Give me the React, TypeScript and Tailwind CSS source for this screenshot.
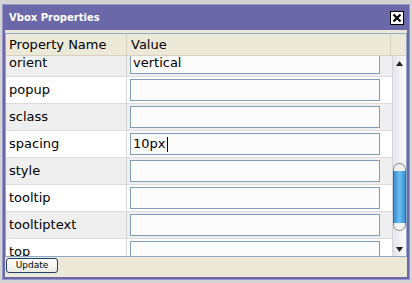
const rows = [
  { name: 'orient', value: 'vertical' },
  { name: 'popup', value: '' },
  { name: 'sclass', value: '' },
  { name: 'spacing', value: '10px', caret: true },
  { name: 'style', value: '' },
  { name: 'tooltip', value: '' },
  { name: 'tooltiptext', value: '' },
  { name: 'top', value: '' },
];

function CloseBox() {
  return (
    <div className="w-[14px] h-[14px] bg-white border border-black flex items-center justify-center">
      <svg width="10" height="10" viewBox="0 0 10 10">
        <path d="M1.5 1.5 L8.5 8.5 M8.5 1.5 L1.5 8.5" stroke="#000" strokeWidth="2.2" />
      </svg>
    </div>
  );
}

function Scrollbar() {
  return (
    <div className="w-[14px] h-full flex flex-col bg-gradient-to-r from-[#e4e4ec] to-[#fbfbfd] border-l border-[#d6d6de]">
      <div className="h-[14px] flex items-center justify-center">
        <svg width="7" height="5" viewBox="0 0 7 5">
          <path d="M3.5 0 L7 5 L0 5 Z" fill="#222" />
        </svg>
      </div>
      <div className="h-[93px]" />
      <div className="h-[68px] flex flex-col">
        <div className="h-[8px] rounded-t-full border border-b-0 border-[#8a8a8a] bg-[#f2f2f2]" />
        <div className="flex-1 bg-gradient-to-r from-[#3a8fd0] via-[#6cc0f0] to-[#3a8fd0] border-x border-[#2d6da8]" />
        <div className="h-[8px] rounded-b-full border border-t-0 border-[#8a8a8a] bg-[#f2f2f2]" />
      </div>
      <div className="flex-1 flex items-end justify-center pb-[4px]">
        <svg width="7" height="5" viewBox="0 0 7 5">
          <path d="M0 0 L7 0 L3.5 5 Z" fill="#222" />
        </svg>
      </div>
    </div>
  );
}

export default function App() {
  return (
    <div
      className="w-[412px] h-[283px] bg-[#d4d4d4] overflow-hidden pt-[4px] pl-[2px]"
      style={{ fontFamily: '"DejaVu Sans", Verdana, sans-serif' }}
    >
      <div className="w-[408px] h-[276px] bg-[#6a68a9] border border-[#9896c6] flex flex-col px-[2px] pb-[2px]">
        {/* Title bar */}
        <div className="h-[25px] flex items-center justify-between pl-[4px] pr-[3px] shrink-0">
          <span className="text-[10px] font-bold text-white">Vbox Properties</span>
          <CloseBox />
        </div>

        {/* Content */}
        <div className="flex-1 bg-[#ece9d8] flex flex-col pt-[3px]">
          <div className="h-[224px] shrink-0 border border-[#8fa9c8] flex flex-col overflow-hidden">
            {/* Header */}
            <div className="h-[22px] flex shrink-0 bg-[#ece9d8] border-b border-[#d6d2bf] text-[13px] text-black">
              <div className="w-[121px] pl-[3px] flex items-center border-r border-[#d6d2bf]">Property Name</div>
              <div className="w-[264px] pl-[4px] flex items-center border-r border-[#d6d2bf]">Value</div>
              <div className="flex-1" />
            </div>
            {/* Body */}
            <div className="flex-1 flex overflow-hidden">
              <div className="flex-1 overflow-hidden">
                <div className="-mt-[6px]">
                  {rows.map((r, i) => (
                    <div
                      key={r.name}
                      className={`h-[27px] flex border-b border-[#dcdcdc] ${i % 2 === 0 ? 'bg-[#efefef]' : 'bg-white'}`}
                    >
                      <div className="w-[121px] pl-[3px] flex items-center text-[13px] text-black border-r border-[#d4d4d4]">
                        {r.name}
                      </div>
                      <div className="flex-1 flex items-center pl-[3px]">
                        <div className="w-[250px] h-[22px] bg-[#fcfcfc] border border-[#7f9db9] flex items-center pl-[2px] text-[13px] text-black">
                          {r.value}
                          {r.caret && <span className="inline-block w-[1px] h-[15px] bg-black ml-[1px]" />}
                        </div>
                      </div>
                    </div>
                  ))}
                </div>
              </div>
              <Scrollbar />
            </div>
          </div>
          {/* Footer */}
          <div className="flex-1 flex items-start pt-[1px] pl-[1px]">
            <button className="w-[52px] h-[15px] rounded-[3px] border border-[#1c3f6e] bg-gradient-to-b from-white to-[#ecebe4] text-[9px] text-black leading-none flex items-center justify-center">
              Update
            </button>
          </div>
        </div>
      </div>
    </div>
  );
}
